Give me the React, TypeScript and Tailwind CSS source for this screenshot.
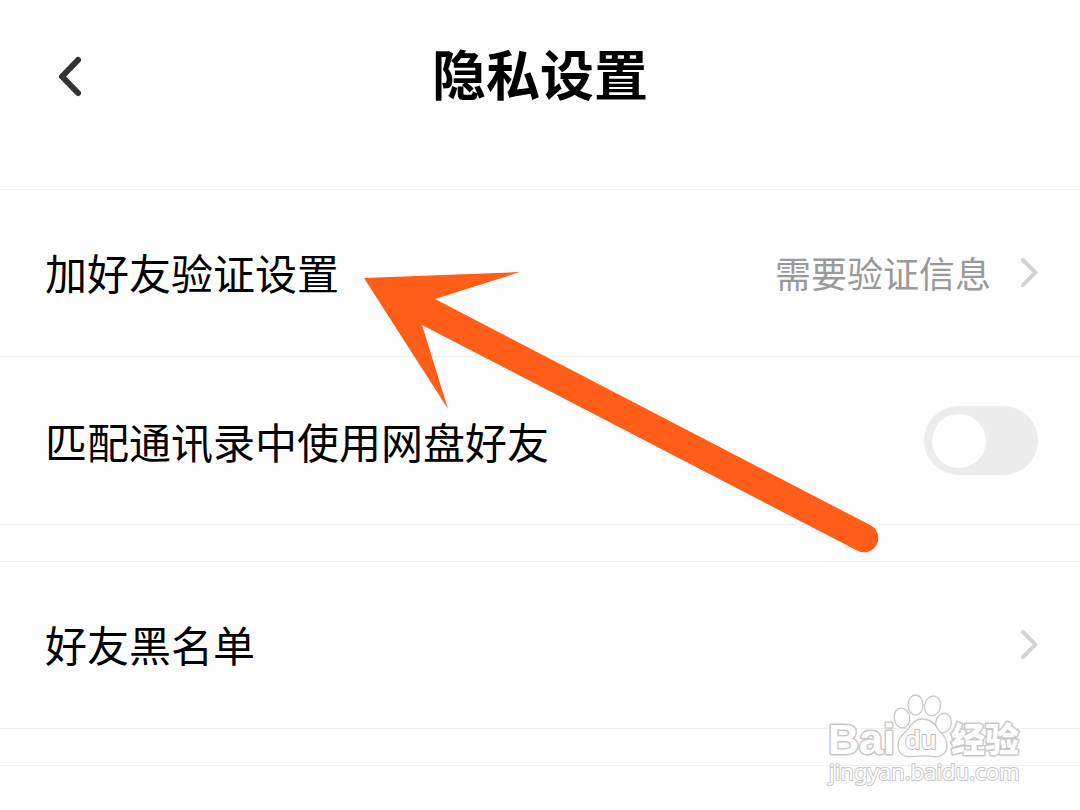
import { useState } from 'react';

function ChevronRight() {
    return (
        <svg viewBox="0 0 18 30" className="h-[30px] w-[18px] flex-shrink-0" fill="none" aria-hidden="true">
            <path d="M3 3L15.500 15.500L3 28" stroke="#d3d3d3" strokeWidth="4" strokeLinecap="round" strokeLinejoin="miter" />
        </svg>
    );
}

function LinkRow({ label, value }: { label: string; value?: string }) {
    return (
        <button
            type="button"
            className="flex w-full items-center border-b border-[#f0f0f0] pt-12 pr-[42px] pb-[50px] pl-[45px] text-left"
        >
            <span className="flex-1 text-[42px] leading-[68px]">{label}</span>
            {value && <span className="mr-[29px] text-[36px] leading-[68px] text-[#999999]">{value}</span>}
            <ChevronRight />
        </button>
    );
}

function SwitchRow({ id, label }: { id: string; label: string }) {
    const [checked, setChecked] = useState(false);

    return (
        <div className="flex items-center border-b border-[#f0f0f0] py-[49px] pr-[42px] pl-[45px]">
            <label htmlFor={id} className="flex-1 text-[42px] leading-[68px]">
                {label}
            </label>
            <input
                id={id}
                type="checkbox"
                role="switch"
                checked={checked}
                onChange={(e) => setChecked(e.target.checked)}
                className="flex h-[69px] w-[114px] flex-shrink-0 cursor-pointer appearance-none items-center rounded-full bg-[#ececec] px-2 before:h-[54px] before:w-[54px] before:rounded-full before:bg-white before:content-[''] checked:justify-end checked:bg-[#06a7ff]"
            />
        </div>
    );
}

function PointerArrow() {
    return (
        <svg
            viewBox="0 0 516 282"
            className="pointer-events-none absolute top-[271px] left-[363px] h-[282px] w-[516px]"
            aria-hidden="true"
        >
            <path
                d="M1 7L157 1L72 28L507 254A14 14 0 0 1 495 280L59 54L85 138Z"
                fill="#ff5d18"
            />
        </svg>
    );
}

function Watermark() {
    return (
        <svg
            viewBox="0 0 200 96"
            className="pointer-events-none absolute top-[692px] left-[825px] h-[96px] w-[200px] font-['Noto_Sans','Noto_Sans_CJK_SC',sans-serif]"
            fill="#fefefe"
            stroke="#c8c8c8"
            strokeLinejoin="round"
        >
            <g strokeWidth="3" style={{ paintOrder: 'stroke' }}>
                <text x="3" y="62" fontSize="43" fontWeight="700" className="font-['Liberation_Sans',sans-serif]">Bai</text>
                <text x="126" y="60" fontSize="34" fontWeight="900">经验</text>
            </g>
            <g strokeWidth="1.300">
                <ellipse cx="77" cy="26" rx="7.800" ry="10" transform="rotate(-8 77 26)" />
                <ellipse cx="90.500" cy="13" rx="7.500" ry="10" />
                <ellipse cx="107.500" cy="14" rx="8" ry="10" transform="rotate(12 107.500 14)" />
                <ellipse cx="118.500" cy="31" rx="7.800" ry="9.800" transform="rotate(10 118.500 31)" />
                <path d="M97 27C105 27 109 30 112 36C115 41 122 44 122 53C122 62 116 65.500 109 64.500C101 63.500 94 63.500 86 64.500C78 65.500 73 61 73 53C73 44 80 42 84 36C87 31 91 27 97 27Z" />
            </g>
            <text x="80" y="57" fontSize="25" fontWeight="600" strokeWidth="2" stroke="#bdbdbd" style={{ paintOrder: 'stroke' }}>du</text>
            <text x="4" y="88" fontSize="22" strokeWidth="2" style={{ paintOrder: 'stroke' }}>jingyan.baidu.com</text>
        </svg>
    );
}

export default function App() {
    return (
        <div className="relative min-h-screen overflow-hidden bg-[#fefefe] font-['Noto_Sans_CJK_SC',sans-serif] text-black">
            {/* ── Header ────────────────────────────────── */}
            <header className="grid grid-cols-[1fr_auto_1fr] items-start border-b border-[#f0f0f0] px-12 pt-12 pb-[85px]">
                <button type="button" aria-label="返回" className="justify-self-start px-2">
                    <svg viewBox="0 0 28 56" className="h-14 w-7" fill="none">
                        <path d="M22 12L6 28.500L22 45" stroke="#333333" strokeWidth="6" strokeLinecap="round" strokeLinejoin="round" />
                    </svg>
                </button>
                <h1 className="text-[54px] leading-[50px] font-bold">隐私设置</h1>
            </header>

            {/* ── Settings ──────────────────────────────── */}
            <main>
                <LinkRow label="加好友验证设置" value="需要验证信息" />
                <SwitchRow id="match-contacts" label="匹配通讯录中使用网盘好友" />
                <div className="h-[37px] border-b border-[#f0f0f0]" />
                <LinkRow label="好友黑名单" />
                <div className="h-[37px] border-b border-[#f0f0f0]" />
            </main>

            <PointerArrow />
            <Watermark />
        </div>
    );
}
